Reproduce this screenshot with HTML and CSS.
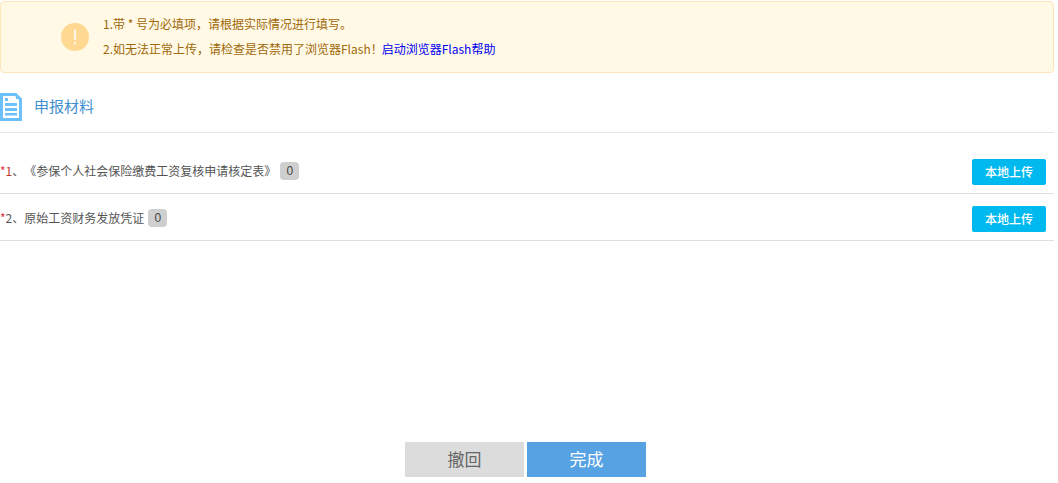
FILE: index.html
```html
<!DOCTYPE html>
<html lang="zh-CN">
<head>
<meta charset="utf-8">
<title>申报材料</title>
<link rel="stylesheet" href="styles.css">
</head>
<body>
<main class="page">
  <section class="alert">
    <svg class="alert-icon" viewBox="0 0 28 28" width="28" height="28" aria-hidden="true">
      <circle cx="14" cy="14" r="14" fill="#ffd891"/>
      <rect x="12.9" y="6.5" width="2.2" height="10.5" fill="#fff6e3"/>
      <rect x="12.9" y="19" width="2.2" height="2.4" fill="#fff6e3"/>
    </svg>
    <div class="alert-text">
      <p class="alert-line">1.带 * 号为必填项，请根据实际情况进行填写。</p>
      <p class="alert-line">2.如无法正常上传，请检查是否禁用了浏览器Flash！<a class="alert-link" href="#">启动浏览器Flash帮助</a></p>
    </div>
  </section>

  <header class="section-head">
    <svg class="doc-icon" viewBox="0 0 22 28" width="22" height="28" aria-hidden="true">
      <path d="M0 0H16L22 6V28H0Z" fill="#6cc0fb"/>
      <path d="M3 3H15L19 7V25H3Z" fill="#fff"/>
      <path d="M16 0L22 6H16Z" fill="#6cc0fb"/>
      <rect x="5" y="5" width="3" height="3" fill="#6cc0fb"/>
      <rect x="5" y="10" width="12" height="3" fill="#6cc0fb"/>
      <rect x="5" y="15" width="12" height="3" fill="#6cc0fb"/>
      <rect x="5" y="20" width="12" height="2.5" fill="#6cc0fb"/>
    </svg>
    <h2 class="section-title">申报材料</h2>
  </header>

  <div class="row row-first">
    <div class="row-label"><span class="req">*</span><span class="req-no">1</span><span class="sep">、</span>《参保个人社会保险缴费工资复核申请核定表》<span class="badge badge-wide">0</span></div>
    <button class="upload" type="button">本地上传</button>
  </div>
  <div class="row">
    <div class="row-label"><span class="req">*</span>2、原始工资财务发放凭证<span class="badge">0</span></div>
    <button class="upload" type="button">本地上传</button>
  </div>

  <footer class="actions">
    <button class="action action-back" type="button">撤回</button>
    <button class="action action-done" type="button">完成</button>
  </footer>
</main>
</body>
</html>
```
FILE: styles.css
```css
* { box-sizing: border-box; }
html, body { margin: 0; padding: 0; background: #fff; }
body { font-family: "Noto Sans CJK SC", "Liberation Sans", sans-serif; font-size: 12px; color: #555; }
.page { width: 1054px; height: 483px; padding-top: 1px; display: flex; flex-direction: column; }

.alert { height: 72px; display: flex; align-items: center; padding-left: 60px; gap: 14px; background: #fff9e6; border: 1px solid #ffe6ba; border-radius: 4px; }
.alert-icon { flex: none; }
.alert-text { display: flex; flex-direction: column; gap: 8px; padding-bottom: 2px; }
.alert-line { margin: 0; line-height: 17px; color: #a06808; }
.alert-link { margin-left: -1px; color: #0000f0; text-decoration: none; }

.section-head { height: 60px; padding-top: 8px; display: flex; align-items: center; gap: 12px; border-bottom: 1px solid #e5e5e5; }
.doc-icon { flex: none; }
.section-title { margin: 0; padding-bottom: 2px; font-size: 15px; font-weight: 400; color: #3f8fcf; }

.row { height: 47px; padding-right: 8px; display: flex; align-items: center; justify-content: space-between; border-bottom: 1px solid #e0e0e0; }
.row-first { height: 61px; padding-top: 14px; }
.row-label { display: flex; align-items: center; color: #555; }
.req { color: #e8303a; }
.req-no { color: #c0392b; }
.badge { margin-top: 2px; margin-left: 4px; min-width: 19px; height: 18px; padding: 0 6px; border-radius: 4px; background: #cfcfcf; color: #444; line-height: 18px; text-align: center; font-family: "Liberation Sans", sans-serif; font-size: 12px; }
.upload { width: 74px; height: 26px; margin-top: 4px; padding: 0 0 2px; border: 0; border-radius: 2px; background: #00b9ef; color: #fff; font: inherit; font-weight: 500; }

.actions { margin-top: auto; margin-bottom: 6px; display: flex; justify-content: center; gap: 3px; padding-right: 3px; }
.action { width: 119px; height: 35px; padding: 0 0 2px; border: 0; font-family: inherit; font-size: 17px; }
.action-back { background: #dcdcdc; color: #666; }
.action-done { background: #56a2e2; color: #fff; }
```
